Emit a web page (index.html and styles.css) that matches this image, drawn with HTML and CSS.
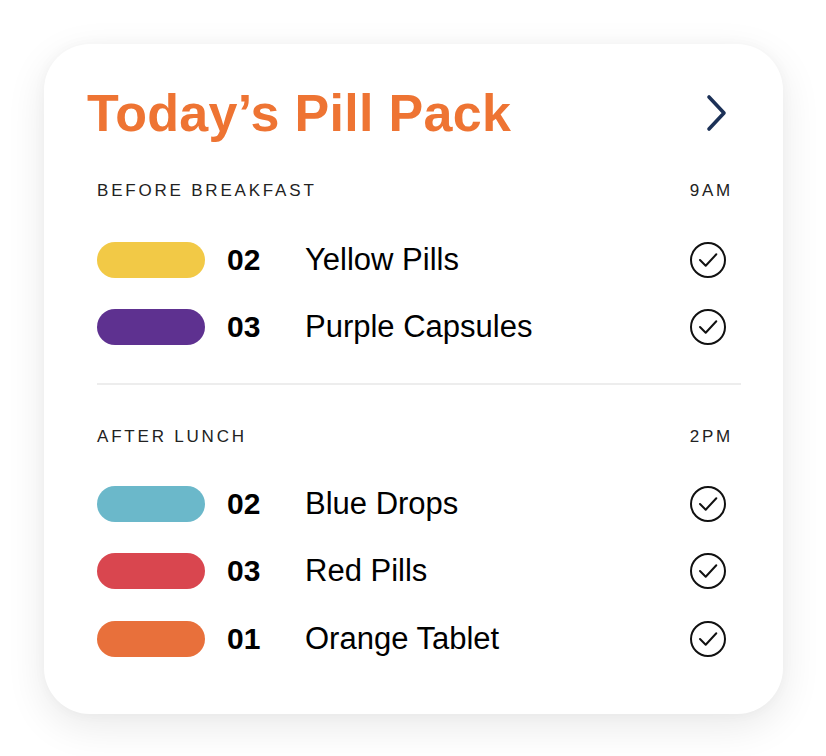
FILE: index.html
```html
<!DOCTYPE html>
<html>
<head>
<meta charset="utf-8">
<link rel="stylesheet" href="styles.css">
</head>
<body>
<div class="card">
  <div class="header">
    <h1 class="title">Today’s Pill Pack</h1>
    <svg class="chev" width="24" height="40" viewBox="0 0 24 40"><path d="M4 4 L19 20 L4 36" fill="none" stroke="#1c3157" stroke-width="3.6" stroke-linecap="round" stroke-linejoin="round"/></svg>
  </div>

  <div class="section">
    <div class="label"><span>BEFORE BREAKFAST</span><span class="time">9AM</span></div>
    <div class="row"><span class="pill yellow"></span><span class="num">02</span><span class="name">Yellow Pills</span><svg class="check" width="38" height="38" viewBox="0 0 38 38"><circle cx="19" cy="19" r="17" fill="none" stroke="#111" stroke-width="2"/><path d="M11 19 L16.7 24.7 L27.3 13.3" fill="none" stroke="#111" stroke-width="2" stroke-linecap="round" stroke-linejoin="round"/></svg></div>
    <div class="row"><span class="pill purple"></span><span class="num">03</span><span class="name">Purple Capsules</span><svg class="check" width="38" height="38" viewBox="0 0 38 38"><circle cx="19" cy="19" r="17" fill="none" stroke="#111" stroke-width="2"/><path d="M11 19 L16.7 24.7 L27.3 13.3" fill="none" stroke="#111" stroke-width="2" stroke-linecap="round" stroke-linejoin="round"/></svg></div>
  </div>

  <div class="divider"></div>

  <div class="section second">
    <div class="label"><span>AFTER LUNCH</span><span class="time">2PM</span></div>
    <div class="row"><span class="pill blue"></span><span class="num">02</span><span class="name">Blue Drops</span><svg class="check" width="38" height="38" viewBox="0 0 38 38"><circle cx="19" cy="19" r="17" fill="none" stroke="#111" stroke-width="2"/><path d="M11 19 L16.7 24.7 L27.3 13.3" fill="none" stroke="#111" stroke-width="2" stroke-linecap="round" stroke-linejoin="round"/></svg></div>
    <div class="row"><span class="pill red"></span><span class="num">03</span><span class="name">Red Pills</span><svg class="check" width="38" height="38" viewBox="0 0 38 38"><circle cx="19" cy="19" r="17" fill="none" stroke="#111" stroke-width="2"/><path d="M11 19 L16.7 24.7 L27.3 13.3" fill="none" stroke="#111" stroke-width="2" stroke-linecap="round" stroke-linejoin="round"/></svg></div>
    <div class="row"><span class="pill orange"></span><span class="num">01</span><span class="name">Orange Tablet</span><svg class="check" width="38" height="38" viewBox="0 0 38 38"><circle cx="19" cy="19" r="17" fill="none" stroke="#111" stroke-width="2"/><path d="M11 19 L16.7 24.7 L27.3 13.3" fill="none" stroke="#111" stroke-width="2" stroke-linecap="round" stroke-linejoin="round"/></svg></div>
  </div>
</div>
</body>
</html>
```

FILE: styles.css
```css
html, body {
  margin: 0;
  padding: 0;
  background: #ffffff;
}
body {
  font-family: "Liberation Sans", Arial, sans-serif;
  color: #000;
  min-height: 756px;
  padding-top: 44px;
  box-sizing: border-box;
}
.card {
  box-sizing: border-box;
  margin: 0 0 0 44px;
  width: 739px;
  height: 670px;
  background: #fff;
  border-radius: 46px;
  box-shadow: 0 12px 40px rgba(0, 0, 0, 0.09), 0 0 14px rgba(0, 0, 0, 0.03);
  padding: 38px 42px 0 53px;
}
.header {
  display: flex;
  align-items: center;
  justify-content: space-between;
  height: 60px;
}
.title {
  margin: 2px 0 0 -10px;
  font-size: 52px;
  line-height: 60px;
  font-weight: 700;
  color: #ee7433;
  letter-spacing: 0.3px;
}
.chev {
  margin-right: 12px;
  margin-top: 2px;
}
.label {
  display: flex;
  justify-content: space-between;
  font-size: 17px;
  line-height: 20px;
  letter-spacing: 2.8px;
  color: #222;
  margin-top: 39px;
  margin-bottom: 25px;
}
.second .label {
  margin-top: 42px;
  margin-bottom: 23px;
}
.time {
  margin-right: 8px;
}
.row {
  display: flex;
  align-items: center;
  height: 67.5px;
}
.pill {
  width: 108px;
  height: 36px;
  border-radius: 18px;
  margin-right: 22px;
}
.yellow { background: #f2c946; }
.purple { background: #5e3190; }
.blue { background: #6bb8ca; }
.red { background: #d9464f; }
.orange { background: #e8703b; }
.num {
  width: 78px;
  font-size: 30px;
  font-weight: 700;
}
.name {
  flex: 1;
  font-size: 31px;
}
.check {
  margin-right: 14px;
}
.divider {
  height: 2px;
  background: #ededed;
  margin-top: 22px;
}
```
